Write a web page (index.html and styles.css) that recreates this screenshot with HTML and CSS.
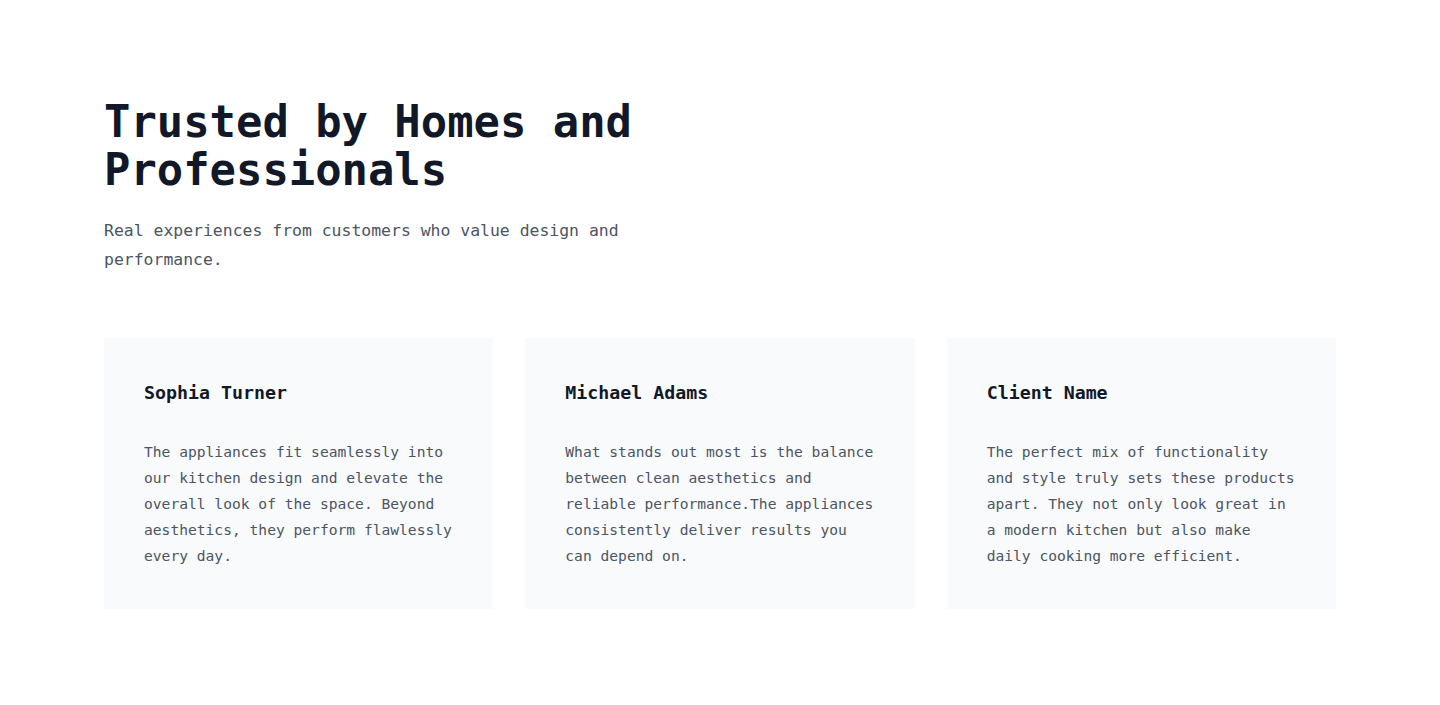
FILE: index.html
```html
<!DOCTYPE html>
<html lang="en">
<head>
<meta charset="utf-8">
<title>Testimonials</title>
<link rel="stylesheet" href="styles.css">
</head>
<body>
<section class="testimonials">
  <header class="intro">
    <h1 class="title">Trusted by Homes and Professionals</h1>
    <p class="lead">Real experiences from customers who value design and performance.</p>
  </header>
  <div class="cards">
    <article class="card">
      <h3 class="name">Sophia Turner</h3>
      <p class="quote">The appliances fit seamlessly into our kitchen design and elevate the overall look of the space. Beyond aesthetics, they perform flawlessly every day.</p>
    </article>
    <article class="card">
      <h3 class="name">Michael Adams</h3>
      <p class="quote">What stands out most is the balance between clean aesthetics and reliable performance.The appliances consistently deliver results you can depend on.</p>
    </article>
    <article class="card">
      <h3 class="name">Client Name</h3>
      <p class="quote">The perfect mix of functionality and style truly sets these products apart. They not only look great in a modern kitchen but also make daily cooking more efficient.</p>
    </article>
  </div>
</section>
</body>
</html>
```
FILE: styles.css
```css
* { box-sizing: border-box; }
html, body { margin: 0; padding: 0; background: #ffffff; }
body {
  font-family: "DejaVu Sans Mono", "Liberation Mono", monospace;
  color: #111827;
}
.testimonials {
  max-width: 1440px;
  margin: 0 auto;
  padding: 98px 104px 60px;
}
.intro {
  max-width: 560px;
  margin-bottom: 63px;
}
.title {
  margin: 0 0 23px;
  font-size: 43.85px;
  line-height: 48px;
  font-weight: 700;
  color: #111827;
}
.lead {
  margin: 0;
  font-size: 16.44px;
  line-height: 28.8px;
  color: #4b5563;
}
.cards {
  display: grid;
  grid-template-columns: repeat(3, 1fr);
  gap: 32px;
}
.card {
  background: #f9fafb;
  padding: 40px 40px 40px;
}
.name {
  margin: 0 0 31px;
  font-size: 18.27px;
  line-height: 30px;
  font-weight: 700;
  color: #111827;
}
.quote {
  margin: 0;
  font-size: 14.62px;
  line-height: 26px;
  color: #4b5563;
}
```
